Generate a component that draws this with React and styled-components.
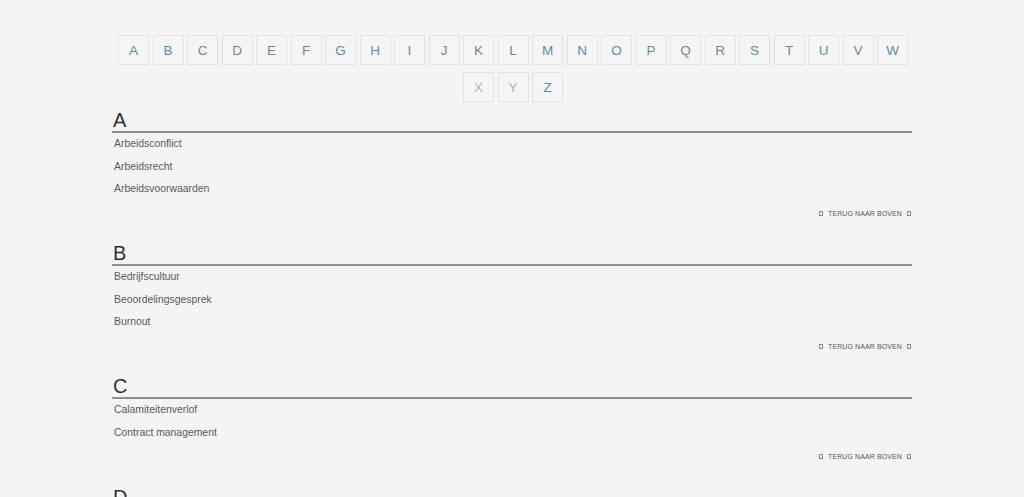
import React from 'react';
import styled, { createGlobalStyle } from 'styled-components';

const GlobalStyle = createGlobalStyle`
  html, body {
    margin: 0;
    padding: 0;
    background: #f4f4f6;
    font-family: "Liberation Sans", Arial, sans-serif;
  }
`;

const Page = styled.div`
  width: 800px;
  margin: 0 auto;
  padding-top: 35px;
`;

const LetterBar = styled.nav`
  display: flex;
  flex-wrap: wrap;
  justify-content: center;
  gap: 7px 3.5px;
  margin-bottom: 7px;
  padding-left: 2px;
`;

const LetterButton = styled.a`
  box-sizing: border-box;
  width: 31px;
  height: 30px;
  display: flex;
  align-items: center;
  justify-content: center;
  background: #f5f5f6;
  border: 1px solid #e2e2e4;
  font-size: 13.5px;
  color: ${props => (props.disabled ? '#b3b3b3' : '#5b8eab')};
  text-decoration: none;
  cursor: ${props => (props.disabled ? 'default' : 'pointer')};
`;

const Section = styled.section`
  margin-bottom: 22px;
`;

const Heading = styled.h2`
  margin: 0;
  font-size: 20px;
  font-weight: normal;
  line-height: 22px;
  color: #2f2f33;
  padding-left: 1px;
  border-bottom: 2px solid #8e8e90;
`;

const ItemList = styled.ul`
  list-style: none;
  margin: 0;
  padding: 0;
`;

const Item = styled.li`
  height: 22.5px;
  line-height: 22.5px;
  font-size: 10.4px;
  color: #58585c;
  padding-left: 2px;
`;

const BackToTop = styled.div`
  display: flex;
  justify-content: flex-end;
  align-items: center;
  gap: 5px;
  margin-top: 5.5px;
  height: 14px;
  padding-right: 1px;
  font-size: 7px;
  letter-spacing: 0.1px;
  color: #555559;
  text-transform: uppercase;
`;

const Tofu = styled.span`
  display: inline-block;
  box-sizing: border-box;
  width: 4px;
  height: 5px;
  border: 1px solid #8a8a8e;
`;

const letters = 'ABCDEFGHIJKLMNOPQRSTUVWXYZ'.split('');
const disabledLetters = ['X', 'Y'];

const sections = [
  { letter: 'A', items: ['Arbeidsconflict', 'Arbeidsrecht', 'Arbeidsvoorwaarden'] },
  { letter: 'B', items: ['Bedrijfscultuur', 'Beoordelingsgesprek', 'Burnout'] },
  { letter: 'C', items: ['Calamiteitenverlof', 'Contract management'] },
  { letter: 'D', items: ['Diversiteit', 'Duurzame inzetbaarheid'] },
];

export default function App() {
  return (
    <>
      <GlobalStyle />
      <Page>
        <LetterBar>
          {letters.map(l => (
            <LetterButton key={l} disabled={disabledLetters.includes(l)}>
              {l}
            </LetterButton>
          ))}
        </LetterBar>
        {sections.map(s => (
          <Section key={s.letter}>
            <Heading>{s.letter}</Heading>
            <ItemList>
              {s.items.map(item => (
                <Item key={item}>{item}</Item>
              ))}
            </ItemList>
            <BackToTop>
              <Tofu />
              Terug naar boven
              <Tofu />
            </BackToTop>
          </Section>
        ))}
      </Page>
    </>
  );
}
